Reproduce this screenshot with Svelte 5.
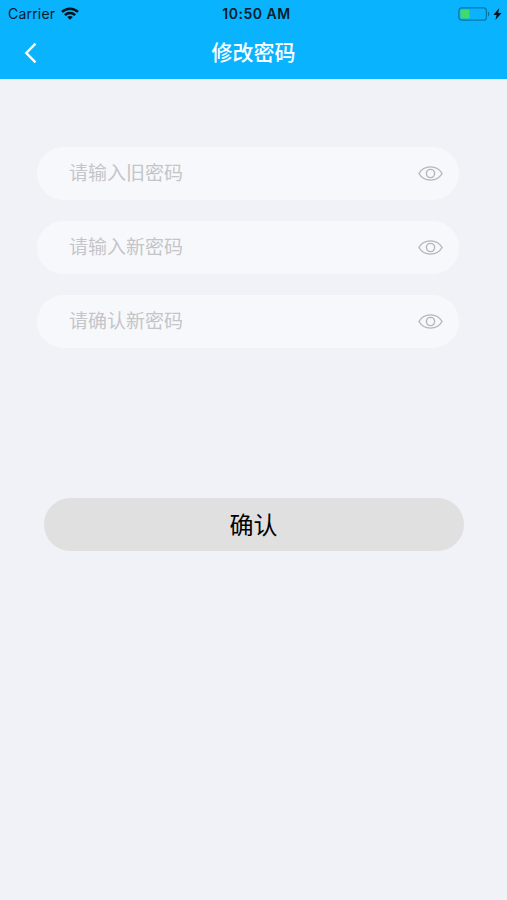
<script lang="ts">
	let fields = [
		{ id: 'old', label: '请输入旧密码', value: '', visible: false },
		{ id: 'new', label: '请输入新密码', value: '', visible: false },
		{ id: 'confirm', label: '请确认新密码', value: '', visible: false }
	];

	function toggleVisible(index: number) {
		fields[index].visible = !fields[index].visible;
	}

	function onInput(index: number, event: Event) {
		fields[index].value = (event.target as HTMLInputElement).value;
	}
</script>

<div class="screen">
	<header>
		<div class="status">
			<div class="carrier">
				<span>Carrier</span>
				<svg class="wifi" width="18" height="13" viewBox="0 0 18 13">
					<g fill="none" stroke="#04141d" stroke-width="2.5">
						<path d="M1 4.9C5.5.6 12.5.6 17 4.9" />
						<path d="M3.9 8.1c2.9-2.7 7.3-2.7 10.2 0" />
					</g>
					<path d="M9 12.8 6.1 10c1.5-1.4 4.3-1.4 5.8 0z" fill="#04141d" />
				</svg>
			</div>
			<span class="time">10:50 AM</span>
			<div class="power">
				<svg width="33" height="14" viewBox="0 0 33 14">
					<rect x=".8" y=".8" width="27.6" height="12.4" rx="3" fill="none" stroke="#0878ab" stroke-width="1.3" />
					<rect x="2.5" y="2.5" width="9" height="9" rx="1" fill="#43db67" />
					<path d="M30 4.6c1.8.6 1.8 4.2 0 4.8z" fill="#0878ab" />
				</svg>
				<svg width="9" height="12" viewBox="0 0 9 12">
					<path d="M6.3 0 .4 6.9h3.2L2.4 12 8.6 4.9H5.2z" fill="#04141d" />
				</svg>
			</div>
		</div>
		<nav>
			<button class="back" aria-label="返回">
				<svg width="14" height="22" viewBox="0 0 14 22">
					<path d="M11.5 1.7 2.3 11l9.2 9.3" fill="none" stroke="#fff" stroke-width="2.4" />
				</svg>
			</button>
			<h1>修改密码</h1>
		</nav>
	</header>

	<form on:submit|preventDefault>
		{#each fields as field, i (field.id)}
			<div class="field">
				<input
					type={field.visible ? 'text' : 'password'}
					placeholder={field.label}
					value={field.value}
					on:input={(event) => onInput(i, event)}
				/>
				<button type="button" class="eye" aria-label="显示密码" on:click={() => toggleVisible(i)}>
					<svg width="25" height="15" viewBox="0 0 25 15">
						<g fill="none" stroke="#b5b6b9" stroke-width="1.4">
							<path d="M.9 7.5C3.4 3.3 7.6.9 12.5.9s9.1 2.4 11.6 6.6c-2.5 4.2-6.7 6.6-11.6 6.6S3.4 11.7.9 7.5z" />
							<circle cx="12.5" cy="7.5" r="4.1" />
						</g>
					</svg>
				</button>
			</div>
		{/each}
		<button class="submit">确认</button>
	</form>
</div>

<style>
	:global(body) {
		margin: 0;
		background-color: #f0f2f8;
	}

	.screen {
		min-height: 900px;
		background-color: #f0f2f8;
		font-family: 'Liberation Sans', 'Noto Sans CJK SC', sans-serif;
	}

	button,
	input {
		margin: 0;
		padding: 0;
		border: none;
		outline: none;
		background: none;
		font-family: inherit;
	}

	svg {
		display: block;
	}

	header {
		height: 79px;
		background-color: #0ab3fe;
	}

	.status {
		display: grid;
		grid-template-columns: 1fr auto 1fr;
		align-items: center;
		height: 27px;
		padding: 0 5px 0 8px;
		font-family: Inter, sans-serif;
		font-size: 14px;
		color: #06202d;
	}

	.carrier {
		display: flex;
		align-items: center;
		gap: 6px;
		letter-spacing: 0.2px;
	}

	.wifi {
		margin-top: -1px;
	}

	.time {
		padding-left: 3px;
		font-weight: 600;
		letter-spacing: 0.5px;
	}

	.power {
		display: flex;
		justify-content: flex-end;
		align-items: center;
		gap: 2px;
	}

	nav {
		display: grid;
		grid-template-columns: 60px 1fr 60px;
		align-items: center;
		height: 51px;
	}

	.back {
		padding-left: 24px;
		cursor: pointer;
	}

	h1 {
		margin: 0;
		padding-top: 1px;
		font-size: 21px;
		font-weight: 500;
		line-height: 30px;
		text-align: center;
		color: #fff;
	}

	form {
		display: flex;
		flex-direction: column;
		gap: 21px;
		padding: 68px 43px 0 37px;
	}

	.field {
		display: flex;
		align-items: center;
		box-sizing: border-box;
		width: 422px;
		height: 53px;
		padding: 0 16px 0 32px;
		border-radius: 27px;
		background-color: #f7f8fb;
	}

	input {
		flex: 1;
		min-width: 0;
		height: 30px;
		font-size: 19px;
		color: #333;
	}

	input::placeholder {
		color: #c4c5c9;
		opacity: 1;
	}

	.eye {
		cursor: pointer;
	}

	.submit {
		align-self: flex-end;
		width: 420px;
		height: 53px;
		margin-top: 129px;
		padding: 0 1px 3px 0;
		border-radius: 27px;
		background-color: #e0e0e0;
		font-size: 24px;
		color: #000;
		cursor: pointer;
	}
</style>
